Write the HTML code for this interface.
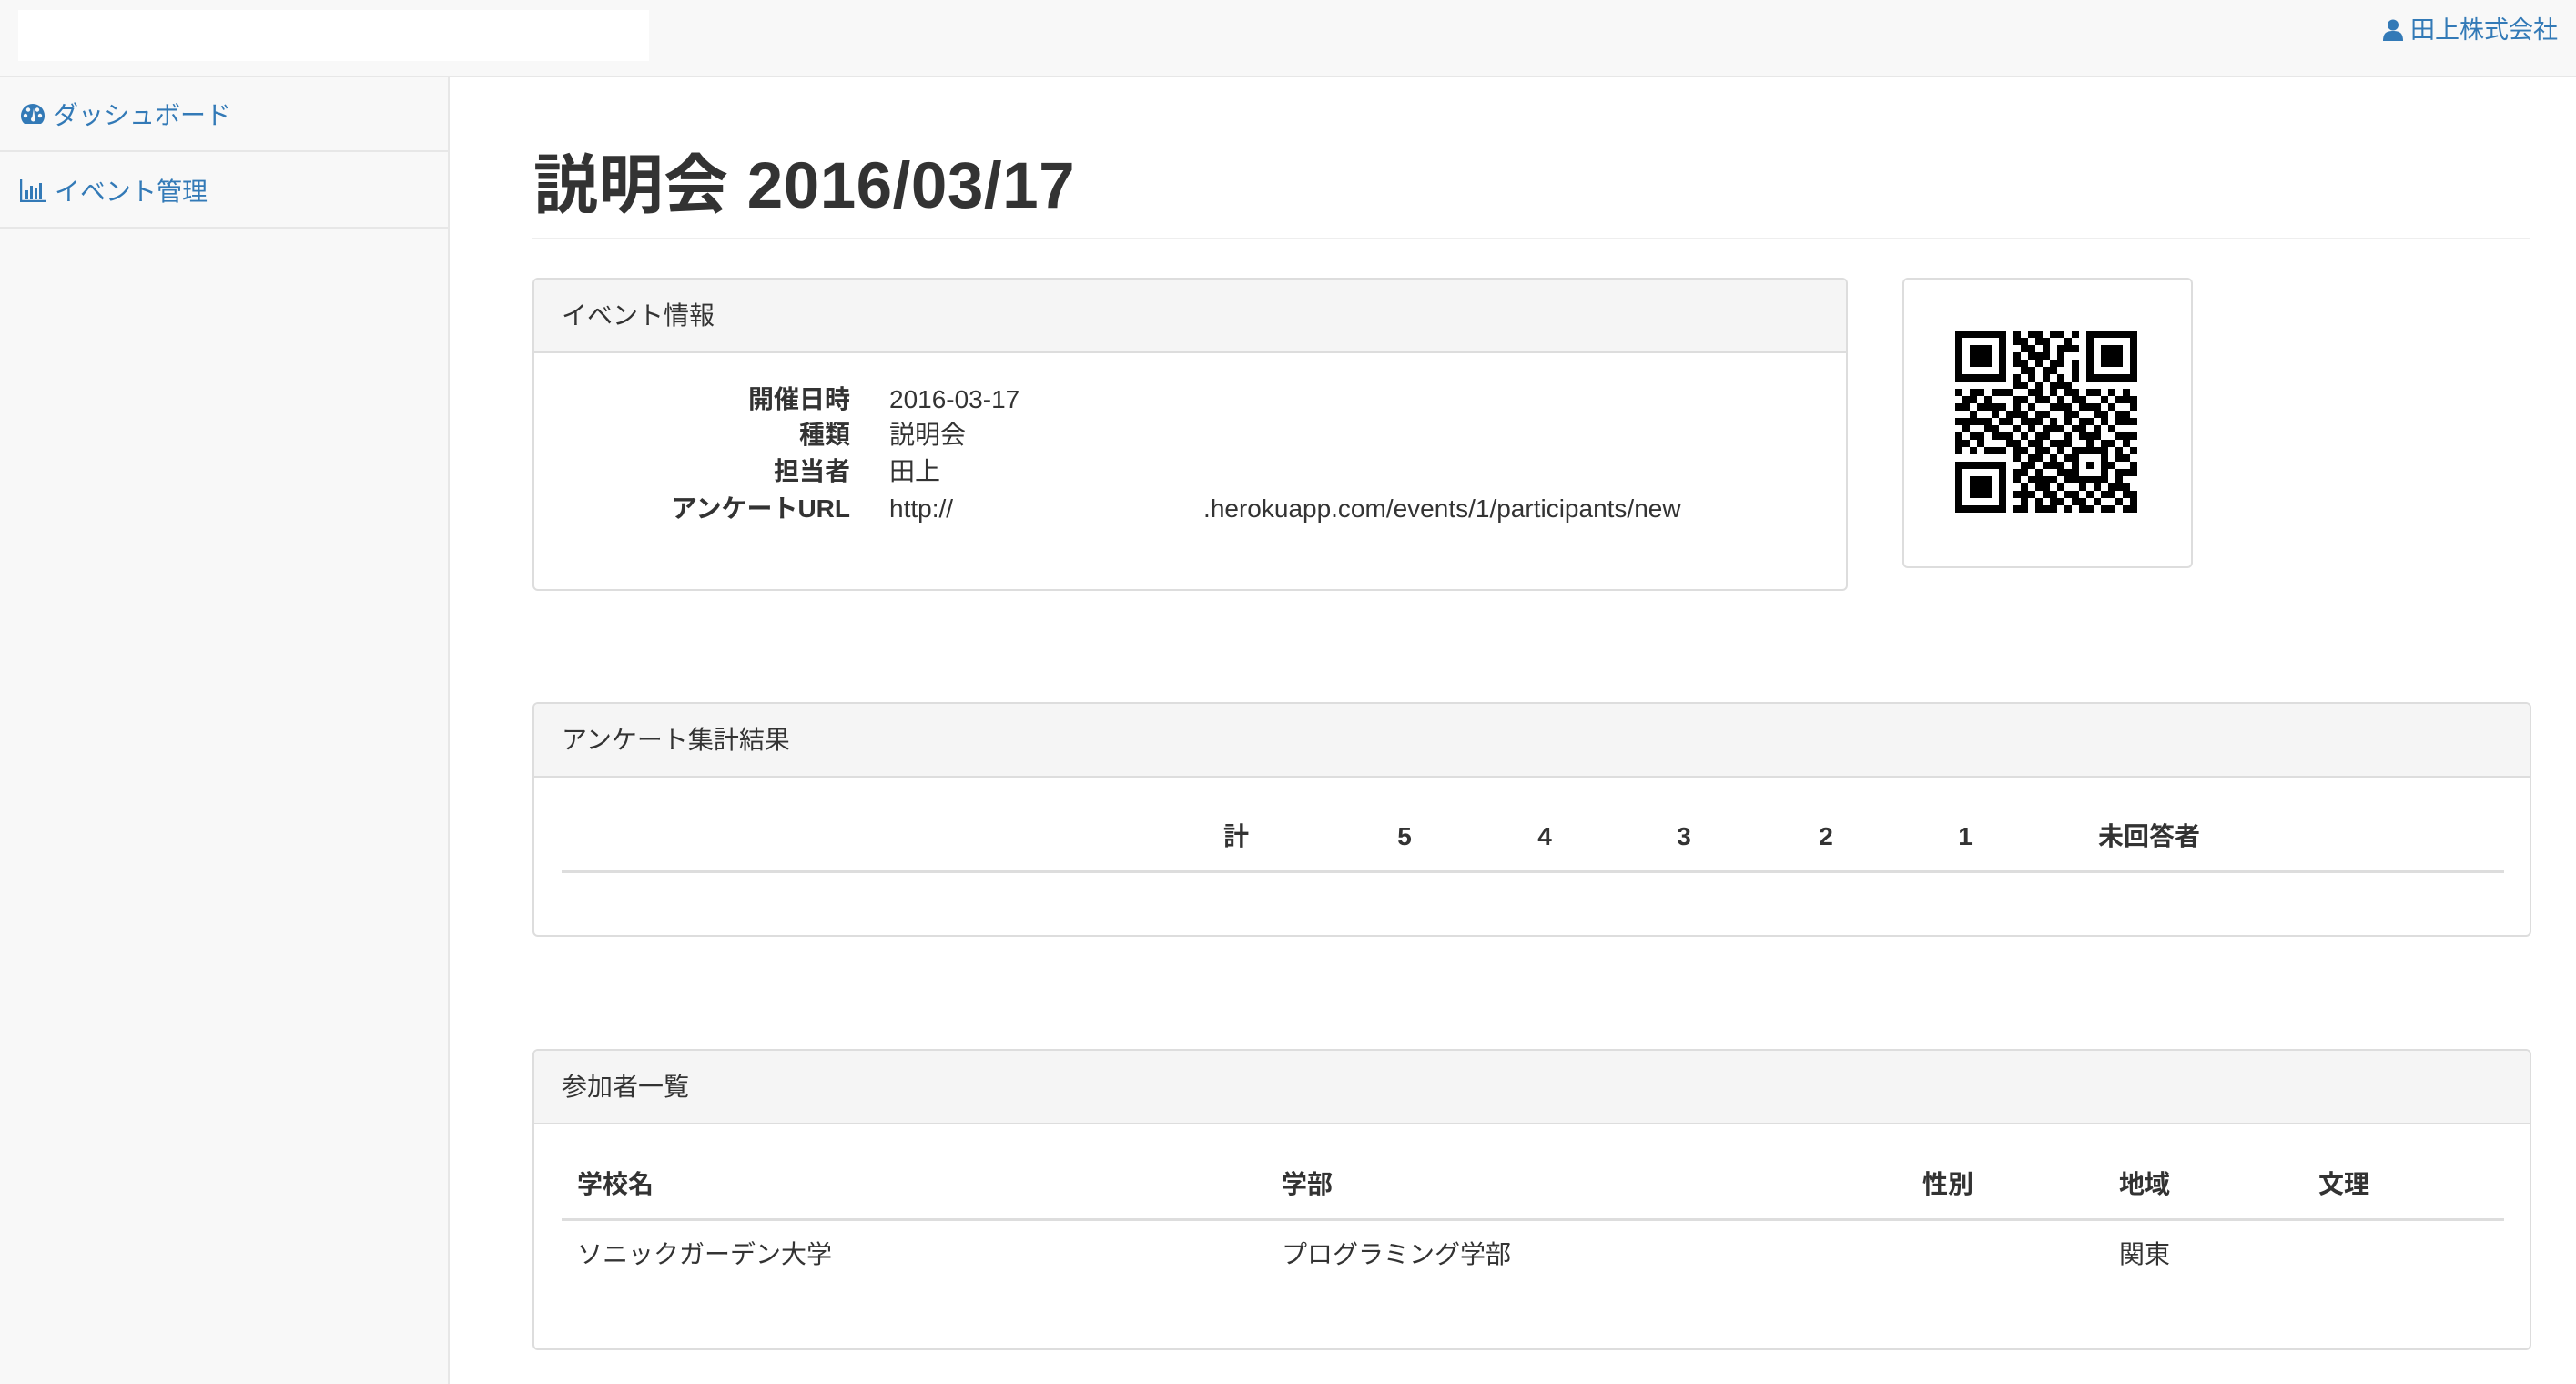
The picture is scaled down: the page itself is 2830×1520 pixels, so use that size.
<!DOCTYPE html>
<html><head><meta charset="utf-8">
<style>
*{box-sizing:border-box;margin:0;padding:0}
body{width:2830px;height:1520px;overflow:hidden;background:#fff;font-family:"Liberation Sans","Noto Sans CJK JP",sans-serif;color:#333;font-size:28px;position:relative}
.abs{position:absolute}
#hdr{left:0;top:0;width:2830px;height:85px;background:#f8f8f8;border-bottom:2px solid #e7e7e7}
#logo{left:20px;top:11px;width:693px;height:56px;background:#fff}
#user{right:20px;top:14px;color:#337ab7;font-size:27px;line-height:38px;display:flex;align-items:center;gap:8px}
#side{left:0;top:85px;width:494px;height:1435px;background:#f8f8f8;border-right:2px solid #e7e7e7}
.nav{position:absolute;left:0;width:492px;height:82px;border-bottom:2px solid #e7e7e7;color:#337ab7;font-size:28px;display:flex;align-items:center;padding-left:22px;gap:8px}
h1{position:absolute;left:586px;top:160px;font-size:71px;font-weight:bold;line-height:90px;color:#333;letter-spacing:0.5px}
#hr{left:585px;top:261px;width:2195px;height:2px;background:#eee}
.panel{position:absolute;border:2px solid #ddd;border-radius:6px;background:#fff;overflow:hidden}
.ph{height:81px;background:#f5f5f5;border-bottom:2px solid #ddd;padding-left:30px;line-height:79px;font-size:28px}
.lbl,.val{line-height:40px;height:40px}
.lbl{position:absolute;right:1094px;font-weight:bold;text-align:right;white-space:nowrap}
.val{position:absolute;left:390px;white-space:nowrap}
.c{position:absolute;font-weight:bold;transform:translateX(-50%);line-height:40px}
</style></head><body>
<div id="hdr" class="abs"></div>
<div id="logo" class="abs"></div>
<div id="user" class="abs"><svg width="22" height="24" viewBox="0 0 22 24"><circle cx="11" cy="6.5" r="6" fill="#337ab7"/><path d="M0 24 C0 15 4 13 11 13 C18 13 22 15 22 24Z" fill="#337ab7"/></svg>田上株式会社</div>
<div id="side" class="abs">
<div class="nav" style="top:0"><svg width="28" height="24" viewBox="0 0 28 24"><path d="M14 1A13 13 0 0 0 1 14c0 4 1.5 7 4 9h18c2.5-2 4-5 4-9A13 13 0 0 0 14 1z" fill="#337ab7"/><circle cx="6" cy="14" r="2.2" fill="#f8f8f8"/><circle cx="9" cy="7.5" r="2.2" fill="#f8f8f8"/><circle cx="19" cy="7.5" r="2.2" fill="#f8f8f8"/><circle cx="22" cy="14" r="2.2" fill="#f8f8f8"/><path d="M13 18l2-12 1.5 12z" fill="#f8f8f8"/><circle cx="14.5" cy="18" r="2.5" fill="#f8f8f8"/></svg>ダッシュボード</div>
<div class="nav" style="top:84px"><svg width="30" height="26" viewBox="0 0 30 26"><path d="M1 1v24h28" stroke="#337ab7" stroke-width="2.5" fill="none"/><rect x="6" y="13" width="3" height="10" fill="#337ab7"/><rect x="11" y="8" width="3" height="15" fill="#337ab7"/><rect x="16" y="11" width="3" height="12" fill="#337ab7"/><rect x="21" y="5" width="3" height="18" fill="#337ab7"/></svg>イベント管理</div>
</div>
<h1>説明会 2016/03/17</h1>
<div id="hr" class="abs"></div>

<div class="panel" style="left:585px;top:305px;width:1445px;height:344px">
<div class="ph">イベント情報</div>
<div style="position:relative">
<div class="lbl" style="top:31px">開催日時</div><div class="val" style="top:31px">2016-03-17</div>
<div class="lbl" style="top:70px">種類</div><div class="val" style="top:70px">説明会</div>
<div class="lbl" style="top:110px">担当者</div><div class="val" style="top:110px">田上</div>
<div class="lbl" style="top:151px">アンケートURL</div><div class="val" style="top:151px">http://<span style="display:inline-block;width:275px"></span>.herokuapp.com/events/1/participants/new</div>
</div></div>

<div class="panel" style="left:2090px;top:305px;width:319px;height:319px">
<svg id="qr" style="position:absolute;left:56px;top:56px" width="200" height="200" viewBox="0 0 25 25" shape-rendering="crispEdges"></svg>
</div>

<div class="panel" style="left:585px;top:771px;width:2196px;height:258px">
<div class="ph">アンケート集計結果</div>
<div class="c" style="left:771px;top:126px">計</div>
<div class="c" style="left:956px;top:126px">5</div>
<div class="c" style="left:1110px;top:126px">4</div>
<div class="c" style="left:1263px;top:126px">3</div>
<div class="c" style="left:1419px;top:126px">2</div>
<div class="c" style="left:1572px;top:126px">1</div>
<div class="c" style="left:1774px;top:126px">未回答者</div>
<div style="position:absolute;left:30px;top:183px;width:2134px;height:3px;background:#ddd"></div>
</div>

<div class="panel" style="left:585px;top:1152px;width:2196px;height:331px">
<div class="ph">参加者一覧</div>
<div class="abs" style="left:47px;top:125px;font-weight:bold">学校名</div>
<div class="abs" style="left:821px;top:125px;font-weight:bold">学部</div>
<div class="abs" style="left:1525px;top:125px;font-weight:bold">性別</div>
<div class="abs" style="left:1741px;top:125px;font-weight:bold">地域</div>
<div class="abs" style="left:1960px;top:125px;font-weight:bold">文理</div>
<div style="position:absolute;left:30px;top:184px;width:2134px;height:3px;background:#ddd"></div>
<div class="abs" style="left:47px;top:202px">ソニックガーデン大学</div>
<div class="abs" style="left:821px;top:202px">プログラミング学部</div>
<div class="abs" style="left:1741px;top:202px">関東</div>
</div>

<script>
var rows=["1111111010110110101111111","1000001011011001001000001","1011101001101011101011101","1011101010111010001011101","1011101011010110101011101","1000001001101100101000001","1111111010101010101111111","0000000011010111000000000","1011011100110101101101010","0110100011011010110010111","1101111010100111011101001","0010010111011001100110110","1111101101110101011010111","0100110010101110110101000","1011011101011001011100111","1101000110110111001011010","1010111011011010111110101","0000000010110101100010110","1111111001101110101011001","1000001011010011100010111","1011101010111101111110100","1011101001011010010101110","1011101011101101101011011","1000001001010110110100101","1111111011011101011011011"];
var s="";for(var y=0;y<25;y++)for(var x=0;x<25;x++)if(rows[y][x]=="1")s+='<rect x="'+x+'" y="'+y+'" width="1" height="1"/>';
document.getElementById("qr").innerHTML=s;
</script>
</body></html>
